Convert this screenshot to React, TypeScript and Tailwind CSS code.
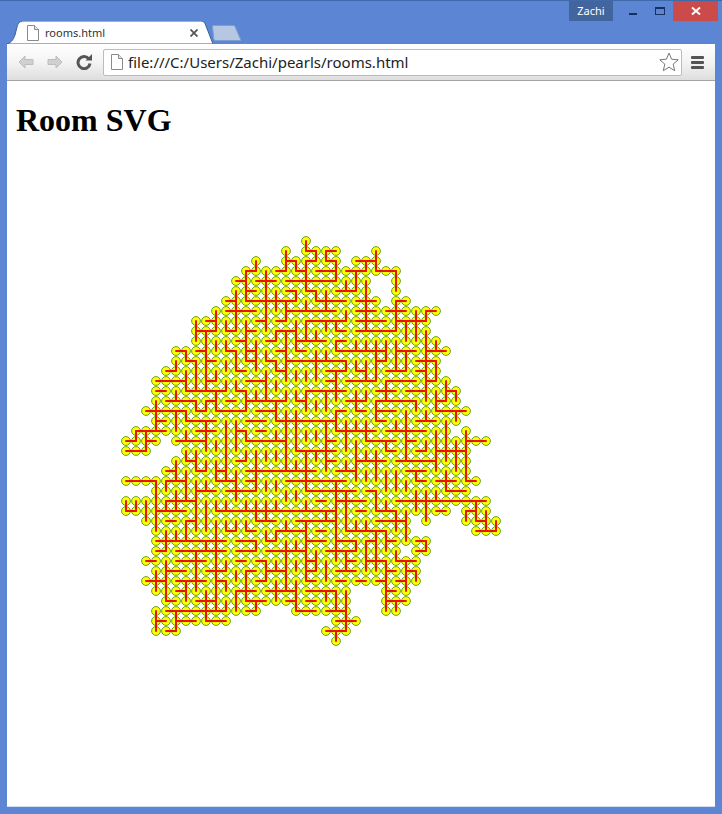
import React from 'react';

// rooms grid: node i,j sits at 10px steps, ranges are given per row
const NODES = [
  '18', '16 18-21 25', '13 16-21 23-25', '12-27', '11-24 27', '11-24 27', '10-25 27-28', '9-31', '7-30', '7-30',
  '7-31', '5-32', '5-31', '4-31', '3-32', '3-33', '3-33', '2-34', '3-33', '1-32 34',
  '0-3 5-36', '0-2 6-34', '5-34', '4-34', '0-35', '3-34', '0-36', '0-32 34-36', '2-28 30 34-37', '3-28 35-37',
  '3-30', '3-27 29-30', '2-29', '3-29', '2-29', '3-22 26-28', '4-22 26-28', '3-13 17-22 26-27', '3-10 21-23', '3-5 20-22',
  '21',
];

const ROW_LINES = [
  '', '18-19 20-21', '16-17 18-19 20-21 23-25', '12-13 15-16 17-18 19-21 22-24 25-27', '11-12 13-15 16-21',
  '12-13 16-17 18-19 21-23', '10-11 12-17 19-22 23-25 27-28', '10-13 16-21 23-25 26-28 30-31',
  '8-9 13-14 15-16 18-22 23-26 27-30', '7-9 10-11 12-13 15-17 21-22 23-27', '11-12 14-15 17-20 21-22',
  '5-6 7-8 10-11 12-13 15-16 17-18 21-26 27-29 30-32', '6-7 8-9 12-13 14-15 16-22 25-26 29-31',
  '4-5 11-12 15-16 20-22 23-24 26-28 29-30', '3-6 8-9 12-14 20-21 22-25 26-29 30-31',
  '3-4 6-10 11-12 18-22 25-27 28-30 32-33', '4-7 8-9 10-11 12-16 17-18 22-24 25-29 31-32',
  '2-6 7-8 9-12 13-15 21-22 23-24 25-27 31-34', '3-4 6-9 12-14 15-21 25-26 29-31',
  '1-4 7-9 11-12 13-14 21-25 26-30', '0-1 2-3 5-8 12-16 20-21 24-27 28-29 34-36',
  '0-2 17-21 26-27 29-30 31-34', '6-7 11-12 20-21 23-26 27-31', '4-5 7-8 9-10 12-19 21-23 28-30',
  '0-3 4-6 9-11 12-13 16-22 29-30 31-33 34-35', '7-9 10-13 18-23 24-25 32-34', '4-7 19-20 21-24 27-36',
  '0-1 3-6 9-21 23-24 25-27 31-32 34-35', '4-5 6-7 13-15 17-21 25-28 35-36', '10-11 12-13 15-18 19-20 22-26 35-37',
  '3-10 11-13 14-15 18-20 21-23 24-25 26-27 29-30', '3-4 5-10 11-13 14-18 20-23 29-30',
  '2-3 5-8 11-12 13-14 18-19 22-23 24-26 27-29', '4-6 8-10 12-13 14-16 18-19 21-23 26-27 28-29',
  '2-4 5-8 9-10 13-14 18-19 21-22 23-24 25-26 27-28', '5-6 11-13 14-17 18-21 26-27',
  '4-5 7-9 12-14 16-17 18-19 26-28', '4-10 12-13 17-19 20-22', '3-4 5-7 8-10 21-23', '4-5 20-22', '',
];

const COLUMN_LINES = [
  '26-27', '19-20 26-27', '19-21 27-28', '17-19 24-29 33-35 37-39', '24-25 26-27 30-31 32-36',
  '12-13 17-19 22-24 25-27 37-39', '11-12 14-15 17-18 21-22 23-26 28-30 34-36', '8-10 12-15 16-17 22-23 25-29 31-35',
  '9-15 16-17 18-21 27-29 30-31 35-38', '7-9 15-17 22-24 28-37', '8-9 19-24 32-33 34-35',
  '5-9 11-13 19-21 24-26 33-34 35-37', '3-6 8-12 15-17 19-20 21-22 28-29 33-36', '2-3 10-13 21-25 27-28 30-31 36-37',
  '3-9 13-16 27-28 32-34', '6-7 9-10 12-13 16-18 29-30 32-33 35-36', '1-3 6-8 9-14 17-23 30-35',
  '2-3 5-6 9-11 18-21 35-37', '0-1 2-5 8-10 15-17 21-25 28-34', '1-2 5-6 12-14 21-22 32-33',
  '1-2 5-7 8-9 15-17 18-23 27-28 33-34 35-36', '2-4 8-9 10-11 13-16 17-19 24-32 35-37 39-40',
  '4-5 12-13 19-21 25-29 31-33 35-39', '3-5 16-17 21-24 30-31', '2-3 4-9 10-11 13-14 18-20 30-33',
  '1-3 10-14 16-18 22-24 25-27 29-33', '10-12 14-16 20-21 23-25 29-31 32-37', '3-5 6-9 10-13 24-25 27-29',
  '8-10 11-13 17-22 28-30 32-35', '7-10 16-17 23-24 33-34', '7-8 10-16 25-28 30-31', '10-11 12-14 15-17 19-23',
  '14-16 18-22 24-25', '15-16 17-18 20-23', '19-24 27-28', '26-28', '28-29', '28-29',
];

const ranges = (s: string) =>
  s.split(' ').filter(Boolean).map((part) => {
    const [a, b] = part.split('-').map(Number);
    return [a, b ?? a] as const;
  });

const px = (n: number) => 8 + n * 10;

type Seg = { x1: number; y1: number; x2: number; y2: number };

const buildGraph = () => {
  const nodes = new Set<string>();
  const linked = new Set<string>();
  const segs: Seg[] = [];
  NODES.forEach((row, j) => ranges(row).forEach(([a, b]) => {
    for (let i = a; i <= b; i++) nodes.add(`${i},${j}`);
  }));
  ROW_LINES.forEach((row, j) => ranges(row).forEach(([a, b]) => {
    segs.push({ x1: a, y1: j, x2: b, y2: j });
    for (let i = a; i <= b; i++) linked.add(`${i},${j}`);
  }));
  COLUMN_LINES.forEach((col, i) => ranges(col).forEach(([a, b]) => {
    segs.push({ x1: i, y1: a, x2: i, y2: b });
    for (let j = a; j <= b; j++) linked.add(`${i},${j}`);
  }));
  // every room hangs on the tree, so a loose node joins the one below it (or above)
  nodes.forEach((key) => {
    if (linked.has(key)) return;
    const [i, j] = key.split(',').map(Number);
    const other = nodes.has(`${i},${j + 1}`) ? j + 1 : j - 1;
    segs.push({ x1: i, y1: j, x2: i, y2: other });
    linked.add(key);
    linked.add(`${i},${other}`);
  });
  return { nodes: Array.from(nodes).map((k) => k.split(',').map(Number)), segs };
};

const RoomGraph = () => {
  const { nodes, segs } = buildGraph();
  return (
    <svg width="390" height="420" className="block ml-[111px] mt-[95px]">
      {nodes.map(([i, j]) => (
        <circle key={`${i}-${j}`} cx={px(i)} cy={px(j)} r="4.4" fill="#ffff00" stroke="#549a14" strokeWidth="0.9" />
      ))}
      {segs.map((s, n) => (
        <line key={n} x1={px(s.x1)} y1={px(s.y1)} x2={px(s.x2)} y2={px(s.y2)} stroke="#ee1100" strokeWidth="2" strokeLinecap="round" />
      ))}
    </svg>
  );
};

const PageIcon = ({ className }: { className: string }) => (
  <svg viewBox="0 0 12 16" className={className} fill="#fff" stroke="#8a8a8a" strokeWidth="1">
    <path d="M0.5 0.5H7.5L11.5 4.5V15.5H0.5Z" />
    <path d="M7.5 0.5V4.5H11.5" fill="#e4e4e4" />
  </svg>
);

const NavArrow = ({ flip }: { flip?: boolean }) => (
  <svg viewBox="0 0 16 14" className={`w-4 h-[14px] ${flip ? '-scale-x-100' : ''}`} fill="#d0d0d0" stroke="#bdbdbd" strokeWidth="1">
    <path d="M7 1L1 7L7 13V9.5H15V4.5H7Z" strokeLinejoin="round" />
  </svg>
);

const App: React.FC = () => {
  return (
    <div className="w-[722px] h-[814px] bg-[#5c86d3] flex flex-col border-t border-[#3f69a8] overflow-hidden">
      {/* title bar */}
      <div className="h-[43px] flex justify-between shrink-0">
        <div className="flex items-end pl-[7px]">
          <div className="relative w-[206px] h-[23px] flex items-center pl-[20px] pr-[15px] gap-[6px] pt-[1px]">
            <svg viewBox="0 0 206 23" className="absolute inset-0 w-full h-full">
              <path
                d="M0 23C5 21 6 19 8 14L10 6C11 2 13 0 17 0H194C197 0 198 2 199 5L206 23Z"
                fill="#ffffff"
                stroke="#3d5f9c"
                strokeWidth="1"
              />
            </svg>
            <PageIcon className="relative w-3 h-4" />
            <span className="relative text-[11px] text-[#333] flex-1 font-['Noto_Sans',sans-serif]">rooms.html</span>
            <svg viewBox="0 0 8 8" className="relative w-2 h-2" stroke="#555" strokeWidth="1.8">
              <path d="M0.5 0.5L7.5 7.5M7.5 0.5L0.5 7.5" />
            </svg>
          </div>
          <svg viewBox="0 0 32 16" className="w-8 h-4 mb-[3px] -ml-[2px]" fill="#b5c7e3" stroke="#7f9dcf">
            <path d="M1.5 1.5C1.5 0.8 2 0.5 3 0.5H22C23 0.5 23.6 0.8 24 1.5L30 15.5H5C3.5 15.5 3 15 2.8 14Z" />
          </svg>
        </div>
        <div className="flex items-start pr-[4px]">
          <div className="w-[44px] h-[20px] bg-[#41659c] text-white text-[11px] flex items-center justify-center font-['Noto_Sans',sans-serif]">
            Zachi
          </div>
          <div className="w-[60px] h-[20px] flex items-center">
            <svg viewBox="0 0 60 20" className="w-[60px] h-5" fill="none">
              <rect x="16" y="12" width="8" height="2" fill="#16305f" />
              <rect x="42.5" y="6.5" width="9" height="7" stroke="#16305f" strokeWidth="1" />
              <rect x="42" y="6" width="10" height="2" fill="#16305f" />
            </svg>
          </div>
          <div className="w-[45px] h-[20px] bg-[#cb4b4b] flex items-center justify-center">
            <svg viewBox="0 0 10 10" className="w-[10px] h-[10px]" stroke="#fff" strokeWidth="2">
              <path d="M1 1.5L9 8.5M9 1.5L1 8.5" />
            </svg>
          </div>
        </div>
      </div>

      {/* toolbar and page */}
      <div className="flex-1 mx-[7px] mb-[7px] bg-white flex flex-col border-b border-[#cfdcf2]">
        <div className="h-[37px] shrink-0 flex items-center bg-gradient-to-b from-white via-[#f4f4f4] to-[#dedede] border-b border-[#a5a5a5] rounded-tr-[2px]">
          <div className="flex items-center pl-[11px] gap-[13px] w-[96px]">
            <NavArrow />
            <NavArrow flip />
            <svg viewBox="0 0 16 16" className="w-4 h-4" fill="none" stroke="#555" strokeWidth="3">
              <path d="M13 5.2A6 6 0 1 0 14 9.5" />
              <path d="M9.5 6.5H16V0Z" fill="#555" stroke="none" />
            </svg>
          </div>
          <div className="w-[579px] h-[27px] bg-white border border-[#bcbcbc] rounded-[2px] flex items-center pl-[7px] pr-[2px]">
            <PageIcon className="w-3 h-4 shrink-0" />
            <span className="flex-1 ml-[5px] text-[15px] text-[#222] font-['Noto_Sans',sans-serif]">
              file:///C:/Users/Zachi/pearls/rooms.html
            </span>
            <svg viewBox="0 0 20 20" className="w-5 h-5" fill="#fff" stroke="#777" strokeWidth="1">
              <path d="M10 1L12.6 7.2L19.2 7.8L14.2 12.1L15.7 18.7L10 15.2L4.3 18.7L5.8 12.1L0.8 7.8L7.4 7.2Z" strokeLinejoin="round" />
            </svg>
          </div>
          <svg viewBox="0 0 13 13" className="w-[13px] h-[13px] ml-[9px]" fill="#555">
            <rect y="0" width="13" height="3" rx="1" />
            <rect y="5" width="13" height="3" rx="1" />
            <rect y="10" width="13" height="3" rx="1" />
          </svg>
        </div>
        <div className="flex-1 pl-[9px] overflow-hidden">
          <h1 className="mt-[21px] text-[32px] leading-[36px] font-bold text-black font-['Liberation_Serif',serif]">Room SVG</h1>
          <div className="-ml-[9px]">
            <RoomGraph />
          </div>
        </div>
      </div>
    </div>
  );
};

export default App;
